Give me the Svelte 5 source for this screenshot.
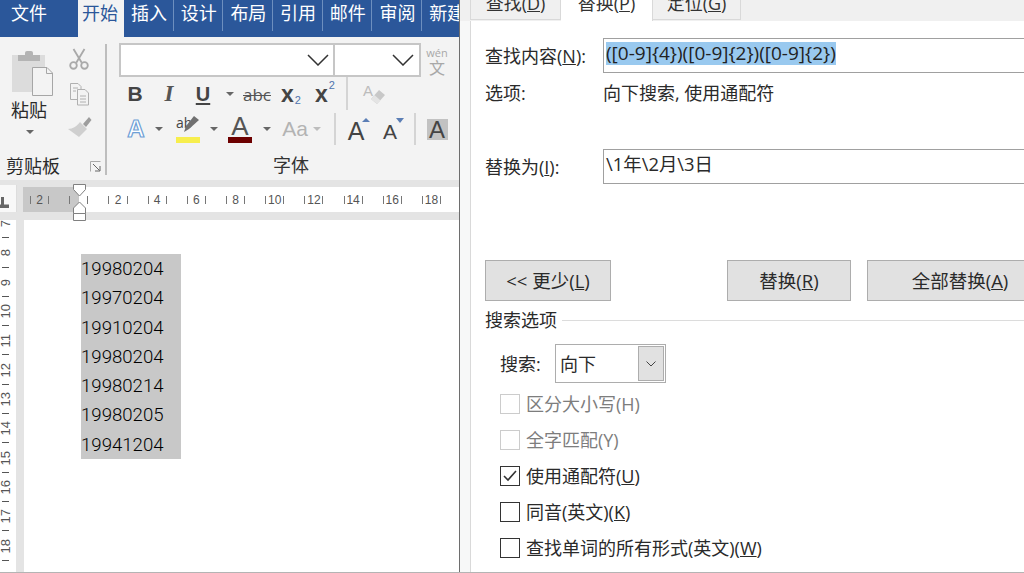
<script>
  const tabs = ['插入', '设计', '布局', '引用', '邮件', '审阅', '新建'];
  const hNums = ['2', '', '2', '4', '6', '8', '10', '12', '14', '16', '18'];
  const vNums = ['7', '8', '9', '10', '11', '12', '13', '14', '15', '16', '17', '18', '9'];
  const dates = ['19980204', '19970204', '19910204', '19980204', '19980214', '19980205', '19941204'];
</script>

<div class="screen">
  <section class="word">
    <nav class="tabbar">
      <span class="file">文件</span>
      <span class="active">开始</span>
      {#each tabs as t}
        <span class="tab"><span class="tabtext">{t}</span></span>
      {/each}
    </nav>

    <div class="ribbon">
      <div class="clip">
        <div class="paste">
          <svg class="clipboard" width="62" height="50" viewBox="0 0 62 50">
            <rect x="12" y="5" width="33" height="37" fill="#dcdcdc" />
            <rect x="18" y="5" width="22" height="6" fill="#b4b4b4" />
            <rect x="25" y="1" width="8" height="6" rx="2" fill="#b4b4b4" />
            <path d="M32.5 17.5H47L52.5 23V45.5H32.5Z" fill="#f3f3f3" stroke="#a6a6a6" />
            <path d="M46.5 18V23.5H52" fill="none" stroke="#a6a6a6" />
          </svg>
          <span class="pastetext">粘贴</span>
          <i class="caret pastecaret"></i>
        </div>
        <div class="smalls">
          <svg width="22" height="25" viewBox="0 0 24 25" fill="none" stroke="#a9a9a9" stroke-width="2">
            <path d="M6 1L15 16M18 1L9 16" />
            <circle cx="6" cy="19" r="3.6" />
            <circle cx="18" cy="19" r="3.6" />
          </svg>
          <svg width="24" height="24" viewBox="0 0 24 24" fill="#f3f3f3" stroke="#b0b0b0">
            <path d="M3.5 1.5H11L14 4.5V17.5H3.5Z" />
            <path d="M10.5 7.5H18L21.5 11V23H10.5Z" />
            <path d="M6 6H11M6 9H9M13 14H19M13 17H19M13 20H19" />
          </svg>
          <svg width="26" height="22" viewBox="0 0 26 22">
            <path d="M17 8L23 1L25.5 4L20 11Z" fill="#9d9d9d" />
            <path d="M14 6L21 13L13 21L2 13C7 13 11 10 14 6Z" fill="#cfcfcf" />
          </svg>
        </div>
        <div class="clipfoot">
          <span>剪贴板</span>
          <svg width="11" height="11" viewBox="0 0 11 11" fill="none" stroke="#666">
            <path d="M.5 10.5V.5H10.5" stroke="#aaa" />
            <path d="M3 3L9.5 9.5M10 5V10H5" />
          </svg>
        </div>
      </div>

      <div class="font">
        <div class="comborow">
          <div class="combo fontname">
            <svg class="chev" width="22" height="12" viewBox="0 0 22 12"><path d="M1 1L11 11L21 1" /></svg>
          </div>
          <div class="combo fontsize">
            <svg class="chev" width="22" height="12" viewBox="0 0 22 12"><path d="M1 1L11 11L21 1" /></svg>
          </div>
          <div class="wen"><span>wén</span><b>文</b></div>
        </div>

        <div class="row one">
          <span class="cell b">B</span>
          <span class="cell it">I</span>
          <span class="cell un">U</span>
          <span class="cell narrow"><i class="caret"></i></span>
          <span class="cell abc">abc</span>
          <span class="cell xx">x<sub>2</sub></span>
          <span class="cell xx">x<sup>2</sup></span>
          <span class="vsep sepa"></span>
          <span class="cell eraser">
            <span>A</span>
            <svg width="16" height="16" viewBox="0 0 16 16"><path d="M9 1L15 6L7 15L1 10Z" fill="#c8c8c8" /><path d="M1 10L4.5 6L10.5 11.5L7 15Z" fill="#e4e4e4" /></svg>
          </span>
        </div>

        <div class="row two">
          <span class="cell effect">A</span>
          <span class="cell c10"><i class="caret"></i></span>
          <span class="cell hl">
            <span class="ab">ab</span>
            <svg class="pen" width="18" height="17" viewBox="0 0 18 17"><path d="M13 0L18 4L8 13L3 16L5 10Z" fill="#707070" /></svg>
            <i class="bar yellow"></i>
          </span>
          <span class="cell c10 m4"><i class="caret"></i></span>
          <span class="cell colora">A<i class="bar red"></i></span>
          <span class="cell c10 m5"><i class="caret"></i></span>
          <span class="cell aa">Aa</span>
          <span class="cell c10"><i class="caret pale"></i></span>
          <span class="vsep sepb"></span>
          <span class="cell grow big">A<i class="tri up"></i></span>
          <span class="cell grow small">A<i class="tri down"></i></span>
          <span class="vsep sepc"></span>
          <span class="cell boxa"><span>A</span></span>
        </div>

        <div class="fontfoot">字体</div>
      </div>
    </div>

    <div class="rulerband">
      <div class="tabstop">
        <svg width="9" height="11" viewBox="0 0 9 11"><path d="M1 0H4V7.5H9V11H0V7.5H1Z" fill="#666" /></svg>
      </div>
      <div class="hruler">
        <div class="hgrey"></div>
        <div class="hcells">
          {#each hNums as n}
            <span class="hcell"><i></i><em>{n}</em><i></i></span>
          {/each}
        </div>
        <svg class="markers" width="16" height="37" viewBox="0 0 16 37" fill="#fff" stroke="#808080">
          <path d="M1.5 .5H13.5V5.5L7.5 12L1.5 5.5Z" />
          <path d="M7.5 18L13.5 24V29.5H1.5V24Z" />
          <path d="M1.5 29.5H13.5V36.5H1.5Z" />
        </svg>
      </div>
    </div>

    <div class="docarea">
      <div class="vruler">
        <div class="vtrack">
          {#each vNums as n}
            <span class="vcell"><em>{n}</em><i></i></span>
          {/each}
        </div>
      </div>
      <div class="page">
        <div class="selection">
          {#each dates as d}
            <div class="dateline">{d}</div>
          {/each}
        </div>
      </div>
    </div>
  </section>

  <section class="dialog">
    <div class="dtabs">
      <span class="dtab first"><span>查找(<u>D</u>)</span></span>
      <span class="dtab current"><span>替换(<u>P</u>)</span></span>
      <span class="dtab third"><span>定位(<u>G</u>)</span></span>
    </div>
    <div class="panel">
      <div class="field findrow">
        <label for="find">查找内容(<u>N</u>):</label>
        <div class="input" id="find"><mark>([0-9]{'{'}4{'}'})([0-9]{'{'}2{'}'})([0-9]{'{'}2{'}'})</mark></div>
      </div>
      <div class="field optrow">
        <span class="lab">选项:</span>
        <span class="optval">向下搜索, 使用通配符</span>
      </div>
      <div class="field replrow">
        <label for="repl">替换为(<u>I</u>):</label>
        <div class="input replval" id="repl">\1年\2月\3日</div>
      </div>
      <div class="buttons">
        <button class="less">&lt;&lt; 更少(<u>L</u>)</button>
        <button class="rep">替换(<u>R</u>)</button>
        <button class="all">全部替换(<u>A</u>)</button>
      </div>
      <div class="legend"><span>搜索选项</span><i></i></div>
      <div class="searchrow">
        <span class="searchlab">搜索:</span>
        <div class="select">
          <span class="selval">向下</span>
          <span class="dropbtn">
            <svg width="10" height="6" viewBox="0 0 10 6"><path d="M.5 .5L5 5L9.5 .5" fill="none" stroke="#444" /></svg>
          </span>
        </div>
      </div>
      <div class="checks">
        <div class="check off"><span class="box"></span>区分大小写(H)</div>
        <div class="check off"><span class="box"></span>全字匹配(Y)</div>
        <div class="check">
          <span class="box"><svg width="14" height="12" viewBox="0 0 14 12"><path d="M1 6L5 10L13 1" fill="none" stroke="#333" stroke-width="1.6" /></svg></span>
          使用通配符(<u>U</u>)
        </div>
        <div class="check"><span class="box"></span>同音(英文)(<u>K</u>)</div>
        <div class="check"><span class="box"></span>查找单词的所有形式(英文)(<u>W</u>)</div>
      </div>
    </div>
  </section>
</div>

<style>
  :global(body) {
    margin: 0;
    background: #fff;
  }
  .screen {
    display: flex;
    width: 1024px;
    height: 572px;
    border-bottom: 1px solid #b4b4b4;
    overflow: hidden;
    font-family: "Open Sans", "Noto Sans CJK SC", sans-serif;
    font-size: 18px;
    color: #2a2a2a;
  }

  /* Word pane */
  .word {
    width: 459px;
    flex: none;
    display: flex;
    flex-direction: column;
    border-right: 1px solid #6e6e6e;
    overflow: hidden;
  }
  .tabbar {
    display: flex;
    flex: none;
    height: 37px;
    background: #2b579a;
    color: #fff;
    line-height: 26px;
    white-space: nowrap;
    overflow: hidden;
  }
  .file {
    flex: none;
    width: 67px;
    padding-left: 11px;
  }
  .active {
    flex: none;
    width: 46px;
    box-sizing: border-box;
    padding-left: 4px;
    background: #f3f3f3;
    color: #2b579a;
  }
  .tab {
    flex: none;
    width: 49.7px;
    height: 31px;
    box-sizing: border-box;
    padding-left: 7px;
    border-right: 1px solid #6d8fbf;
  }
  .tab:last-child {
    border-right: 0;
  }
  .tabtext {
    display: block;
    width: 36px;
  }

  .ribbon {
    flex: none;
    display: flex;
    height: 143px;
    background: #f3f3f3;
  }
  .clip {
    flex: none;
    width: 105px;
    display: grid;
    grid-template-columns: 62px 34px 9px;
    grid-template-rows: 106px 1fr;
    position: relative;
  }
  .paste {
    display: flex;
    flex-direction: column;
    align-items: center;
    padding-top: 13px;
    box-sizing: border-box;
  }
  .clipboard {
    flex: none;
  }
  .pastetext {
    font-size: 18px;
    line-height: 24px;
    margin-left: -4px;
    margin-top: -2px;
  }
  .pastecaret {
    margin: 8px 0 0 -2px;
  }
  .smalls {
    display: flex;
    flex-direction: column;
    align-items: center;
    padding-top: 10px;
    gap: 10px;
    box-sizing: border-box;
    margin-left: -1px;
  }
  .clipfoot {
    grid-column: 1 / 4;
    display: flex;
    align-items: center;
    justify-content: space-between;
    padding: 0 4px 0 6px;
    height: 34px;
    margin-top: 5px;
    font-size: 18px;
  }
  .clipfoot svg {
    margin-top: 3px;
  }
  .font {
    flex: 1;
    position: relative;
    border-left: 2px solid #bdbdbd;
    margin: 7px 0 5px;
    min-width: 0;
  }
  .comborow {
    display: flex;
    height: 34px;
    margin-top: -1px;
    padding-left: 12px;
  }
  .combo {
    box-sizing: border-box;
    height: 34px;
    background: #fff;
    border: 2px solid #c6c6c6;
    display: flex;
    align-items: center;
    justify-content: flex-end;
    padding-right: 4px;
  }
  .fontname {
    width: 216px;
  }
  .fontsize {
    width: 86px;
    border-left: 0;
    margin-left: 0;
    padding-right: 5px;
  }
  .chev path {
    fill: none;
    stroke: #333;
    stroke-width: 1.5;
  }
  .wen {
    width: 32px;
    display: flex;
    flex-direction: column;
    align-items: center;
    color: #a8a8a8;
  }
  .wen span {
    font-size: 11px;
    line-height: 11px;
    margin-top: 4px;
  }
  .wen b {
    font-weight: 400;
    font-size: 16px;
    line-height: 16px;
    margin-top: 2px;
  }

  .row {
    display: flex;
    align-items: center;
    padding-left: 11px;
    color: #444;
  }
  .row.one {
    height: 28px;
    margin-top: 3px;
  }
  .row.two {
    height: 28px;
    margin-top: 7px;
  }
  .cell {
    flex: none;
    width: 34px;
    height: 28px;
    display: flex;
    align-items: center;
    justify-content: center;
    position: relative;
    font-family: "Liberation Sans", sans-serif;
  }
  .narrow {
    width: 20px;
  }
  .c10 {
    width: 10px;
  }
  .m4 {
    margin-left: 4px;
  }
  .m5 {
    margin-left: 5px;
  }
  .caret {
    display: inline-block;
    width: 0;
    height: 0;
    border-left: 4px solid transparent;
    border-right: 4px solid transparent;
    border-top: 4px solid #666;
  }
  .caret.pale {
    border-top-color: #bdbdbd;
  }
  .b {
    font-weight: 700;
    font-size: 21px;
  }
  .it {
    font-family: "Liberation Serif", serif;
    font-style: italic;
    font-weight: 700;
    font-size: 23px;
    color: #555;
  }
  .un {
    font-weight: 700;
    font-size: 20px;
    text-decoration: underline;
    text-underline-offset: 2px;
    text-decoration-thickness: 1.5px;
  }
  .abc {
    font-family: "Open Sans", sans-serif;
    font-size: 17px;
    text-decoration: line-through;
    text-decoration-thickness: 1px;
    color: #555;
  }
  .xx {
    font-weight: 700;
    font-size: 23px;
    color: #444;
  }
  .xx sub,
  .xx sup {
    font-weight: 400;
    font-size: 11px;
    color: #4f74ad;
    line-height: 0;
    margin-left: 1px;
  }
  .xx sub {
    transform: translateY(6px);
  }
  .xx sup {
    transform: translateY(-9px);
  }
  .vsep {
    flex: none;
    width: 2px;
    background: #d4d4d4;
  }
  .sepa {
    height: 33px;
    margin: -2px 7px 0 4px;
  }
  .sepb {
    height: 32px;
    margin: 0 3px 0 12px;
  }
  .sepc {
    height: 32px;
    margin: 0 4px 0 7px;
  }
  .eraser {
    color: #bcbcbc;
    font-size: 15px;
  }
  .eraser span {
    position: absolute;
    left: 8px;
    top: 2px;
  }
  .eraser svg {
    position: absolute;
    left: 15px;
    top: 9px;
  }
  .effect {
    width: 36px;
    font-size: 24px;
    color: #fff;
    font-weight: 700;
    -webkit-text-stroke: 1.2px #6f9fd6;
  }
  .hl {
    margin-left: 7px;
    font-size: 14px;
  }
  .ab {
    position: absolute;
    left: 5px;
    top: -2px;
    font-family: "Open Sans", sans-serif;
    font-size: 14px;
    color: #444;
  }
  .pen {
    position: absolute;
    left: 10px;
    top: 1px;
  }
  .bar {
    position: absolute;
    left: 5px;
    width: 24px;
    bottom: 0;
    height: 6px;
  }
  .yellow {
    background: #f7ee4d;
  }
  .red {
    background: #6d0000;
  }
  .colora {
    margin-left: 4px;
    font-size: 26px;
    padding-bottom: 6px;
    box-sizing: border-box;
    color: #555;
  }
  .aa {
    margin-left: 6px;
    font-size: 21px;
    color: #b3b3b3;
  }
  .big {
    font-size: 25px;
    color: #444;
    padding-top: 4px;
    box-sizing: border-box;
  }
  .small {
    font-size: 21px;
    color: #444;
    padding-top: 6px;
    box-sizing: border-box;
  }
  .tri {
    position: absolute;
    width: 0;
    height: 0;
    border-left: 4px solid transparent;
    border-right: 4px solid transparent;
  }
  .tri.up {
    right: 3px;
    top: 3px;
    border-bottom: 4px solid #5b7eb5;
  }
  .tri.down {
    right: 3px;
    top: 3px;
    border-top: 5px solid #5b7eb5;
  }
  .boxa span {
    width: 21px;
    height: 21px;
    background: #c2c2c2;
    font-size: 24px;
    line-height: 21px;
    text-align: center;
    color: #444;
    display: block;
  }
  .fontfoot {
    text-align: center;
    font-size: 18px;
    line-height: 26px;
    margin-top: 9px;
    padding-left: 16px;
    color: #333;
  }

  .rulerband {
    flex: none;
    height: 40px;
    display: flex;
    background: #e4e4e4;
    padding-top: 7px;
    box-sizing: border-box;
    position: relative;
  }
  .tabstop {
    flex: none;
    width: 17px;
    height: 27px;
    margin-top: -2px;
    background: #f8f8f8;
    border-right: 1px solid #ddd;
    display: flex;
    align-items: flex-end;
    padding-bottom: 4px;
    box-sizing: border-box;
  }
  .hruler {
    flex: 1;
    margin-left: 6px;
    height: 25px;
    background: #fff;
    position: relative;
    overflow: visible;
    min-width: 0;
  }
  .hgrey {
    position: absolute;
    left: 0;
    top: 0;
    width: 56px;
    height: 25px;
    background: #c8c8c8;
  }
  .hcells {
    display: flex;
    position: relative;
    margin-left: -3px;
    height: 25px;
    width: 439px;
    overflow: hidden;
  }
  .hcell {
    flex: none;
    width: 19.2px;
    margin: 0 10px;
    display: flex;
    align-items: center;
    justify-content: space-between;
    color: #555;
  }
  .hcell i {
    width: 1px;
    height: 8px;
    background: #777;
  }
  .hcell em {
    font-style: normal;
    font-size: 12px;
    font-family: "Liberation Sans", sans-serif;
    white-space: nowrap;
  }
  .markers {
    position: absolute;
    left: 49px;
    top: -3px;
  }

  .docarea {
    flex: 1;
    display: flex;
    min-height: 0;
  }
  .vruler {
    flex: none;
    width: 16px;
    border-right: 8px solid #e4e4e4;
    overflow: hidden;
  }
  .vtrack {
    display: flex;
    flex-direction: column;
    margin-top: -11px;
  }
  .vcell {
    flex: none;
    height: 29.3px;
    position: relative;
    display: flex;
    align-items: center;
    justify-content: center;
    width: 10px;
  }
  .vcell em {
    font-style: normal;
    font-size: 13px;
    line-height: 13px;
    color: #555;
    writing-mode: vertical-rl;
    transform: rotate(180deg);
    font-family: "Liberation Sans", sans-serif;
    white-space: nowrap;
  }
  .vcell i {
    position: absolute;
    left: 2px;
    bottom: 0;
    width: 7px;
    height: 1px;
    background: #555;
  }
  .page {
    flex: 1;
    background: #fff;
    padding: 34px 0 0 57px;
  }
  .selection {
    width: 100px;
    background: #c8c8c8;
    font-family: "Roboto", "Liberation Sans", sans-serif;
    font-weight: 300;
    font-size: 18.6px;
    color: #000;
  }
  .dateline {
    height: 29.3px;
    line-height: 31.3px;
  }

  /* Dialog */
  .dialog {
    flex: 1;
    min-width: 0;
    background: #f7f8f8;
    overflow: hidden;
    display: flex;
    flex-direction: column;
  }
  .dtabs {
    flex: none;
    display: flex;
    height: 21px;
    background: #f0f0f0;
    padding-left: 10px;
    position: relative;
  }
  .dtab {
    box-sizing: border-box;
    height: 20px;
    overflow: hidden;
    line-height: 20px;
    text-align: center;
    border-right: 1px solid #d9d9d9;
    border-bottom: 1px solid #d9d9d9;
    background: #f0f0f0;
    color: #333;
  }
  .dtab span {
    display: block;
    margin-top: -7px;
  }
  .first {
    width: 91px;
    border-left: 1px solid #d9d9d9;
  }
  .current {
    width: 92px;
    height: 21px;
    background: #fff;
    border-bottom: 0;
  }
  .third {
    width: 88px;
  }
  .panel {
    flex: 1;
    margin: -1px 0 0 10px;
    padding-left: 14px;
    background: #fff;
    border-left: 1px solid #d9d9d9;
    border-top: 1px solid #d9d9d9;
  }
  .field {
    display: flex;
    align-items: center;
    white-space: nowrap;
  }
  .field label,
  .lab {
    flex: none;
    width: 118px;
  }
  .field label,
  .lab,
  .optval,
  .legend span,
  .searchlab,
  .selval {
    margin-top: -2px;
  }
  .findrow {
    margin-top: 17px;
    height: 35px;
  }
  .optrow {
    margin-top: 7px;
    height: 26px;
  }
  .replrow {
    margin-top: 43px;
    height: 35px;
  }
  .input {
    flex: 1;
    box-sizing: border-box;
    height: 35px;
    margin-right: -20px;
    border: 1px solid #a0a0a0;
    padding: 2px 2px;
    line-height: 24px;
    font-size: 19px;
  }
  .replval {
    font-size: 18.4px;
    padding-left: 2px;
  }
  mark {
    background: #99c9ef;
    color: #222;
    padding: 0;
    display: inline-block;
    line-height: 23px;
  }
  .buttons {
    display: flex;
    margin-top: 76px;
    gap: 16px;
  }
  button {
    flex: none;
    box-sizing: border-box;
    height: 41px;
    background: #e1e1e1;
    border: 1px solid #adadad;
    font: inherit;
    font-size: 18.5px;
    color: inherit;
    padding: 0 0 2px;
  }
  .less {
    width: 126px;
    margin-right: 100px;
  }
  .rep {
    width: 124px;
  }
  .all {
    width: 186px;
  }
  .legend {
    display: flex;
    align-items: center;
    gap: 5px;
    height: 26px;
    margin-top: 6px;
  }
  .legend i {
    flex: 1;
    height: 1px;
    background: #dcdcdc;
  }
  .searchrow {
    display: flex;
    align-items: center;
    margin: 11px 0 0 15px;
    height: 39px;
  }
  .searchlab {
    width: 55px;
  }
  .select {
    box-sizing: border-box;
    width: 111px;
    height: 39px;
    border: 1px solid #adadad;
    display: flex;
    align-items: center;
    justify-content: space-between;
    padding: 1px 1px 1px 4px;
  }
  .dropbtn {
    box-sizing: border-box;
    width: 26px;
    height: 35px;
    background: #e1e1e1;
    border: 1px solid #adadad;
    display: flex;
    align-items: center;
    justify-content: center;
  }
  .checks {
    display: flex;
    flex-direction: column;
    gap: 16px;
    margin: 11px 0 0 15px;
  }
  .check {
    display: flex;
    align-items: flex-start;
    height: 20px;
    line-height: 20px;
    white-space: nowrap;
  }
  .box {
    flex: none;
    box-sizing: border-box;
    width: 20px;
    height: 20px;
    margin-right: 6px;
    border: 1px solid #333;
    display: flex;
    align-items: center;
    justify-content: center;
  }
  .off {
    color: #7d7d7d;
  }
  .off .box {
    border-color: #ccc;
  }
</style>
